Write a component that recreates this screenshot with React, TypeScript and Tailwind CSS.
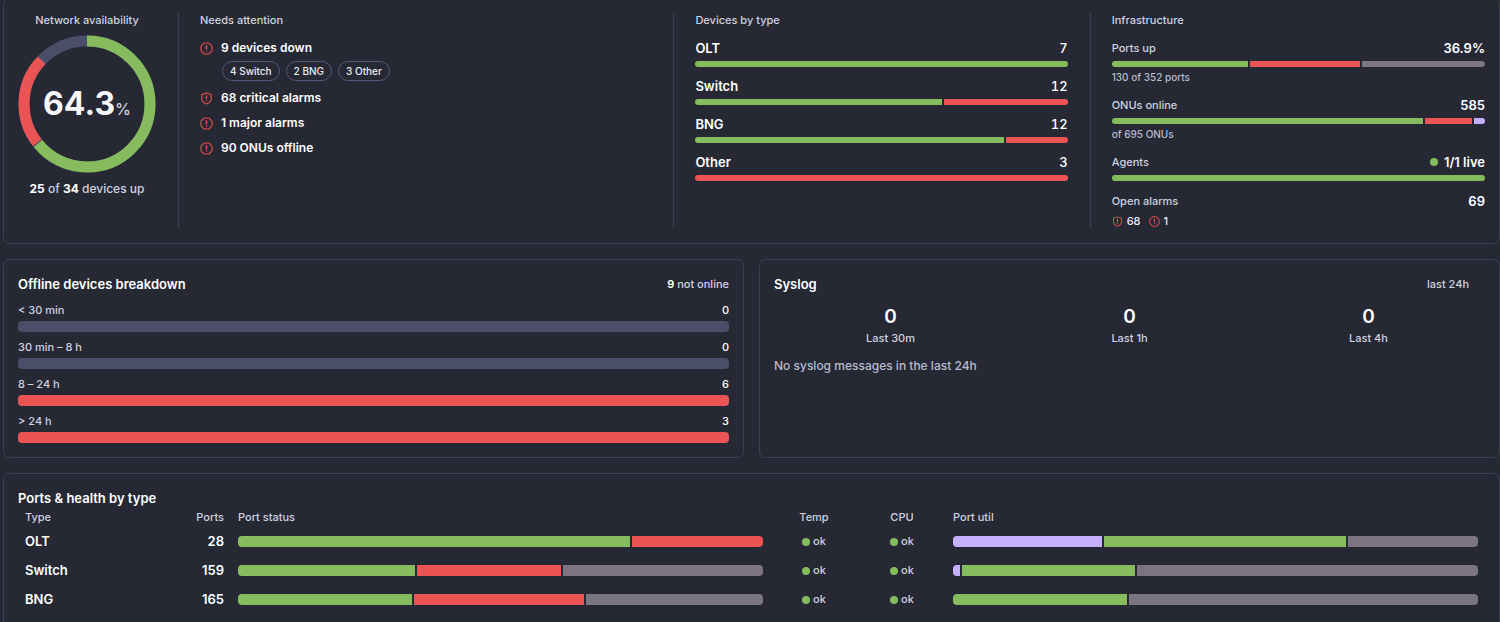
import type { ReactNode } from 'react';

type Tone = 'up' | 'down' | 'off' | 'idle' | 'info';
type Segment = [Tone, number];

const toneClass: Record<Tone, string> = {
  up: 'bg-[#86bc5d]',
  down: 'bg-[#ea5455]',
  off: 'bg-[#7b7583]',
  idle: 'bg-[#4a4e68]',
  info: 'bg-[#c5b1ff]',
};

function Bar({ segments, thick = false }: { segments: Segment[]; thick?: boolean }) {
  return (
    <div className={`flex w-full gap-[2px] overflow-hidden ${thick ? 'h-[11px] rounded-[4px]' : 'h-[6px] rounded-[3px]'}`}>
      {segments.map(([tone, value]) => (
        <div key={tone} className={`basis-0 ${toneClass[tone]}`} style={{ flexGrow: value }} />
      ))}
    </div>
  );
}

function AlertIcon({ className }: { className: string }) {
  return (
    <svg viewBox="0 0 24 24" className={className} fill="none" stroke="currentColor" strokeWidth="2.2" strokeLinecap="round" strokeLinejoin="round" aria-hidden="true">
      <path d="M8.700 1.800h6.600c.8 0 1.500.3 2.100.9l3.900 3.900c.6.6.9 1.300.9 2.100v6.600c0 .8-.3 1.500-.9 2.100l-3.900 3.900c-.6.6-1.300.9-2.100.9H8.700c-.8 0-1.500-.3-2.100-.9l-3.900-3.900c-.6-.6-.9-1.300-.9-2.100V8.700c0-.8.3-1.500.9-2.100l3.900-3.900c.6-.6 1.300-.9 2.100-.9z" />
      <path d="M12 7v5.500M12 16.500v.2" strokeWidth="2.800" />
    </svg>
  );
}

function ShieldIcon({ className }: { className: string }) {
  return (
    <svg viewBox="0 0 24 24" className={className} fill="none" stroke="currentColor" strokeWidth="2.2" strokeLinecap="round" strokeLinejoin="round" aria-hidden="true">
      <path d="M12 1.800c2.600 1.700 5.300 2.300 8.600 2.300v8.200c0 4.800-3.300 7.900-8.600 9.900-5.300-2-8.600-5.100-8.600-9.900V4.100c3.300 0 6-.6 8.600-2.300z" />
      <path d="M12 7.500v4.500M12 16v.2" strokeWidth="2.800" />
    </svg>
  );
}

function Dot() {
  return <span className="inline-block size-2 shrink-0 rounded-full bg-[#86bc5d]" />;
}

function Card({ children, className = '' }: { children: ReactNode; className?: string }) {
  return <section className={`rounded-[6px] border border-[#3b3f56] p-[14px] ${className}`}>{children}</section>;
}

function Heading({ children }: { children: ReactNode }) {
  return <h2 className="text-[11px] leading-[15px] font-medium text-[#d0d2e0]">{children}</h2>;
}

function Availability() {
  const ring = 'fill-none [stroke-width:11]';
  return (
    <div className="flex flex-col items-center pr-[22px]">
      <Heading>Network availability</Heading>
      <div className="mt-[7px] grid place-items-center">
        <svg viewBox="0 0 138 138" className="col-start-1 row-start-1 size-[138px] -rotate-90" aria-hidden="true">
          <circle cx="69" cy="69" r="63" pathLength="100" className={`${ring} stroke-[#4a4e68]`} />
          <circle cx="69" cy="69" r="63" pathLength="100" strokeDasharray="22.7 100" strokeDashoffset="-64.5" className={`${ring} stroke-[#ea5455]`} />
          <circle cx="69" cy="69" r="63" pathLength="100" strokeDasharray="64.2 100" className={`${ring} stroke-[#86bc5d]`} />
        </svg>
        <p className="col-start-1 row-start-1 text-[32px] leading-none font-bold text-[#f8f8fc]">
          64.3<span className="text-[16px] font-medium text-[#d0d2e0]">%</span>
        </p>
      </div>
      <p className="mt-[6px] text-[12px] leading-5 font-medium text-[#d0d2e0]">
        <b className="font-bold text-white">25</b> of <b className="font-bold text-white">34</b> devices up
      </p>
    </div>
  );
}

function Attention({ icon, children }: { icon: ReactNode; children: ReactNode }) {
  return (
    <div className="flex items-center gap-2 text-[12px] leading-5 font-semibold text-white">
      {icon}
      <span>{children}</span>
    </div>
  );
}

const column = 'border-l border-[#3b3f56] pl-[21px]';
const alertClass = 'size-[13px] shrink-0 text-[#e04b4d]';

const deviceTypes: { name: string; total: number; segments: Segment[] }[] = [
  { name: 'OLT', total: 7, segments: [['up', 7]] },
  { name: 'Switch', total: 12, segments: [['up', 8], ['down', 4]] },
  { name: 'BNG', total: 12, segments: [['up', 10], ['down', 2]] },
  { name: 'Other', total: 3, segments: [['down', 3]] },
];

const infrastructure: { name: string; value: string; segments: Segment[]; note?: string; live?: boolean }[] = [
  { name: 'Ports up', value: '36.9%', segments: [['up', 130], ['down', 105], ['off', 117]], note: '130 of 352 ports' },
  { name: 'ONUs online', value: '585', segments: [['up', 585], ['down', 90], ['info', 20]], note: 'of 695 ONUs' },
  { name: 'Agents', value: '1/1 live', segments: [['up', 1]], live: true },
];

const offline: { range: string; count: number }[] = [
  { range: '< 30 min', count: 0 },
  { range: '30 min – 8 h', count: 0 },
  { range: '8 – 24 h', count: 6 },
  { range: '> 24 h', count: 3 },
];

const ports: { type: string; count: number; status: Segment[]; util: Segment[] }[] = [
  { type: 'OLT', count: 28, status: [['up', 21], ['down', 7]], util: [['info', 8], ['up', 13], ['off', 7]] },
  { type: 'Switch', count: 159, status: [['up', 54], ['down', 44], ['off', 61]], util: [['info', 2], ['up', 53], ['off', 104]] },
  { type: 'BNG', count: 165, status: [['up', 55], ['down', 54], ['off', 56]], util: [['up', 55], ['off', 110]] },
];

function Ok() {
  return (
    <span className="flex items-center justify-center gap-[3px] font-medium">
      <Dot />
      ok
    </span>
  );
}

export default function App() {
  return (
    <main className="flex h-screen flex-col gap-[15px] overflow-hidden bg-[#262833] pl-[3px] font-['Inter',sans-serif] text-[#d0d2e0]">
      <Card className="-mt-[2px] grid shrink-0 grid-cols-[160px_495fr_416fr_395fr]">
        <Availability />

        <div className={`${column} pr-[22px]`}>
          <Heading>Needs attention</Heading>
          <div className="mt-[10px] flex flex-col gap-[5px]">
            <div className="pb-[2px]">
              <Attention icon={<AlertIcon className={alertClass} />}>9 devices down</Attention>
              <div className="mt-[3px] ml-[22px] flex gap-[6px]">
                {['4 Switch', '2 BNG', '3 Other'].map((chip) => (
                  <span key={chip} className="h-5 rounded-full border border-[#54587a] px-[7px] text-[10px] leading-[18px] font-medium text-[#eceef6]">
                    {chip}
                  </span>
                ))}
              </div>
            </div>
            <Attention icon={<ShieldIcon className={alertClass} />}>68 critical alarms</Attention>
            <Attention icon={<AlertIcon className={alertClass} />}>1 major alarms</Attention>
            <Attention icon={<AlertIcon className={alertClass} />}>90 ONUs offline</Attention>
          </div>
        </div>

        <div className={`${column} pr-[22px]`}>
          <Heading>Devices by type</Heading>
          <div className="mt-[10px] flex flex-col gap-[9px]">
            {deviceTypes.map((d) => (
              <div key={d.name}>
                <div className="mb-[3px] flex justify-between text-[13px] leading-5 font-semibold text-white">
                  <span>{d.name}</span>
                  <span className="font-medium tabular-nums">{d.total}</span>
                </div>
                <Bar segments={d.segments} />
              </div>
            ))}
          </div>
        </div>

        <div className={column}>
          <Heading>Infrastructure</Heading>
          <div className="mt-[10px] flex flex-col gap-[10px]">
            {infrastructure.map((item) => (
              <div key={item.name}>
                <div className="mb-[3px] flex items-center justify-between text-[11px] leading-5 font-medium">
                  <span>{item.name}</span>
                  <span className="flex items-center gap-[6px] text-[13px] font-semibold text-white">
                    {item.live && <Dot />}
                    {item.value}
                  </span>
                </div>
                <Bar segments={item.segments} />
                {item.note && <p className="mt-[2px] text-[10px] leading-4 font-medium text-[#b9bbd0]">{item.note}</p>}
              </div>
            ))}
            <div>
              <div className="flex items-center justify-between text-[11px] leading-5 font-medium">
                <span>Open alarms</span>
                <span className="text-[13px] font-semibold text-white">69</span>
              </div>
              <div className="mt-[2px] flex items-center gap-2 text-[11px] leading-4 font-medium text-[#eceef6]">
                <span className="flex items-center gap-1">
                  <ShieldIcon className="size-[11px] text-[#e04b4d]" />
                  68
                </span>
                <span className="flex items-center gap-1">
                  <AlertIcon className="size-[11px] text-[#e04b4d]" />1
                </span>
              </div>
            </div>
          </div>
        </div>
      </Card>

      <div className="grid shrink-0 grid-cols-2 gap-[15px]">
        <Card>
          <div className="flex items-center justify-between leading-5">
            <h2 className="text-[13px] font-semibold text-white">Offline devices breakdown</h2>
            <p className="text-[11px] font-medium">
              <b className="font-semibold text-white">9</b> not online
            </p>
          </div>
          <div className="mt-2 flex flex-col gap-[7px]">
            {offline.map((o) => (
              <div key={o.range}>
                <div className="mb-[3px] flex justify-between text-[11px] leading-4 font-medium">
                  <span>{o.range}</span>
                  <span className="text-white">{o.count}</span>
                </div>
                <Bar thick segments={[[o.count > 0 ? 'down' : 'idle', 1]]} />
              </div>
            ))}
          </div>
        </Card>
        <Card>
          <div className="flex items-center justify-between pr-4 leading-5">
            <h2 className="text-[13px] font-semibold text-white">Syslog</h2>
            <p className="text-[11px] font-medium">last 24h</p>
          </div>
          <div className="mt-[11px] grid grid-cols-3 gap-[6px] text-center">
            {['Last 30m', 'Last 1h', 'Last 4h'].map((label) => (
              <div key={label}>
                <p className="text-[19px] leading-6 font-semibold text-white">0</p>
                <p className="mt-[1px] text-[11px] leading-4 font-medium">{label}</p>
              </div>
            ))}
          </div>
          <p className="mt-[10px] text-[12px] leading-5 font-medium text-[#b9bbd0]">No syslog messages in the last 24h</p>
        </Card>
      </div>

      <Card className="shrink-0">
        <h2 className="text-[13px] leading-5 font-semibold text-white">Ports &amp; health by type</h2>
        <table className="w-full table-fixed text-[11px]">
          <colgroup>
            <col className="w-[142px]" />
            <col className="w-[71px]" />
            <col />
            <col className="w-[88px]" />
            <col className="w-[88px]" />
            <col />
          </colgroup>
          <thead>
            <tr className="h-[19px] leading-[19px] [&>th]:px-[7px] [&>th]:py-0 [&>th]:font-medium">
              <th className="text-left">Type</th>
              <th className="text-right">Ports</th>
              <th className="text-left">Port status</th>
              <th className="text-center">Temp</th>
              <th className="text-center">CPU</th>
              <th className="text-left">Port util</th>
            </tr>
          </thead>
          <tbody>
            {ports.map((row) => (
              <tr key={row.type} className="h-[29px] [&>td]:px-[7px] [&>td]:py-0">
                <td className="text-[13px] font-semibold text-white">{row.type}</td>
                <td className="text-right text-[13px] font-semibold text-white">{row.count}</td>
                <td><Bar thick segments={row.status} /></td>
                <td><Ok /></td>
                <td><Ok /></td>
                <td><Bar thick segments={row.util} /></td>
              </tr>
            ))}
          </tbody>
        </table>
      </Card>
    </main>
  );
}
